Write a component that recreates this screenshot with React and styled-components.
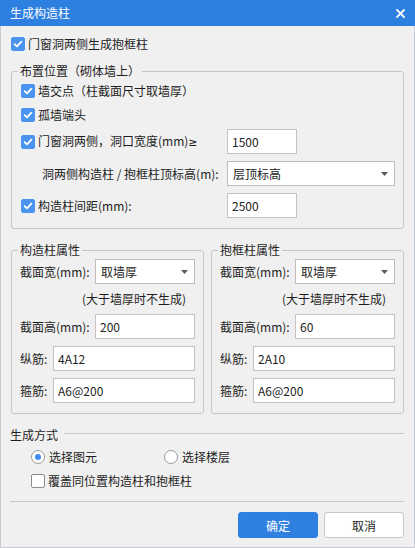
import React from "react";
import styled, { createGlobalStyle } from "styled-components";

const FONT = `"Noto Sans CJK SC", "Microsoft YaHei", "Noto Sans", sans-serif`;

const GlobalStyle = createGlobalStyle`
  html, body { margin: 0; padding: 0; background: #f0f0f0; }
  body { font-family: ${FONT}; font-size: 12px; color: #1e1e1e; }
  *, *::before, *::after { box-sizing: border-box; }
`;

const Window = styled.div`
  width: 415px;
  height: 548px;
  display: flex;
  flex-direction: column;
  background: #f0f0f0;
`;

const TitleBar = styled.div`
  height: 26px;
  flex-shrink: 0;
  background: #2d7fe0;
  color: #fff;
  display: flex;
  align-items: center;
  justify-content: space-between;
  padding: 0 10px 0 10px;
  font-size: 12px;
  line-height: 16px;
`;

const CloseButton = styled.div`
  width: 10px;
  height: 10px;
  display: flex;
  align-items: center;
  justify-content: center;
`;

const Body = styled.div`
  flex: 1;
  display: flex;
  flex-direction: column;
  padding: 0 10px;
  border: 1px solid #c5ccd6;
  border-top: none;
`;

const CheckRow = styled.label`
  display: flex;
  align-items: center;
  height: ${(p) => p.$h || 24}px;
  margin-top: ${(p) => p.$top || 0}px;
  padding-left: ${(p) => p.$indent || 0}px;
  gap: ${(p) => p.$gap ?? 3}px;
  line-height: 16px;
  white-space: nowrap;
`;

const Box = styled.span`
  width: 14px;
  height: 14px;
  flex-shrink: 0;
  border-radius: 2px;
  display: flex;
  align-items: center;
  justify-content: center;
  background: ${(p) => (p.$checked ? "#4a94ef" : "#fff")};
  border: 1px solid ${(p) => (p.$checked ? "#4a94ef" : "#8c8c8c")};
`;

const Group = styled.fieldset`
  margin: ${(p) => p.$top || 0}px 0 0 0;
  padding: 0;
  min-width: 0;
  border: 1px solid #c6c6c6;
  border-radius: 3px;
  width: ${(p) => (p.$w ? `${p.$w}px` : "auto")};
  flex: ${(p) => (p.$grow ? "1" : "none")};
`;

const Legend = styled.legend`
  margin-left: 6px;
  padding: 0 2px;
  font-size: 12px;
  line-height: 16px;
  color: #1e1e1e;
`;

const GroupInner = styled.div`
  display: flex;
  flex-direction: column;
  padding: ${(p) => p.$pad || "0 9px 10px 9px"};
`;

const Stack = styled.div`
  display: flex;
  flex-direction: column;
  gap: 7px;
  margin-top: ${(p) => p.$top || 0}px;
`;

const FieldRow = styled.div`
  display: flex;
  align-items: center;
  height: 25px;
  margin-top: ${(p) => p.$top || 0}px;
`;

const LabelCell = styled.div`
  width: ${(p) => p.$w}px;
  flex-shrink: 0;
  padding-left: ${(p) => p.$indent || 0}px;
  display: flex;
  align-items: center;
  gap: 3px;
  white-space: nowrap;
  line-height: 16px;
`;

const Symbol = styled.span`
  font-family: "DejaVu Sans", "Liberation Sans", sans-serif;
  font-size: 11px;
`;

const TextInput = styled.input`
  height: 25px;
  width: ${(p) => (p.$w ? `${p.$w}px` : "auto")};
  flex: ${(p) => (p.$w ? "none" : "1")};
  min-width: 0;
  border: 1px solid #c3c3c3;
  background: #fff;
  padding: 0 4px;
  font-family: ${FONT};
  font-size: 12px;
  color: #222;
  outline: none;
  margin: 0;
`;

const Select = styled.div`
  height: 25px;
  width: ${(p) => (p.$w ? `${p.$w}px` : "auto")};
  flex: ${(p) => (p.$w ? "none" : "1")};
  border: 1px solid #bdbdbd;
  background: #fff;
  display: flex;
  align-items: center;
  justify-content: space-between;
  padding: 0 6px 0 5px;
  color: #222;
  line-height: 16px;
`;

const Note = styled.div`
  height: 30px;
  display: flex;
  align-items: center;
  padding-left: ${(p) => p.$indent}px;
  white-space: nowrap;
  line-height: 16px;
`;

const PropsRow = styled.div`
  display: flex;
  gap: 7px;
  margin-top: 13px;
`;

const SectionHeader = styled.div`
  display: flex;
  align-items: center;
  height: 16px;
  margin: 13px 0 0 -1px;
  line-height: 16px;
`;

const HeaderLine = styled.div`
  flex: 1;
  height: 1px;
  margin: -3px 0 0 6px;
  background: #c8c8c8;
`;

const RadioRow = styled.div`
  display: flex;
  align-items: center;
  height: 20px;
  margin-top: 4px;
  padding-left: 20px;
`;

const RadioItem = styled.label`
  display: flex;
  align-items: center;
  gap: 4px;
  width: ${(p) => (p.$w ? `${p.$w}px` : "auto")};
  line-height: 16px;
`;

const RadioCircle = styled.span`
  width: 14px;
  height: 14px;
  border-radius: 50%;
  border: 1px solid #9a9a9a;
  background: #fff;
  display: flex;
  align-items: center;
  justify-content: center;
  &::after {
    content: "";
    width: 6px;
    height: 6px;
    border-radius: 50%;
    background: ${(p) => (p.$on ? "#3d8ef0" : "transparent")};
  }
`;

const Separator = styled.div`
  height: 1px;
  background: #c8c8c8;
  margin: 10px 0 0 -1px;
`;

const ButtonBar = styled.div`
  display: flex;
  justify-content: flex-end;
  gap: 6px;
  margin-top: 10px;
`;

const Button = styled.button`
  width: 80px;
  height: 26px;
  border-radius: 3px;
  font-family: ${FONT};
  font-size: 12px;
  margin: 0;
  padding: 0;
  cursor: pointer;
  background: ${(p) => (p.$primary ? "#2f80e0" : "#fff")};
  color: ${(p) => (p.$primary ? "#fff" : "#1e1e1e")};
  border: 1px solid ${(p) => (p.$primary ? "#2f80e0" : "#c8c8c8")};
`;

const Check = ({ checked }) => (
  <Box $checked={checked}>
    {checked && (
      <svg width="10" height="10" viewBox="0 0 10 10">
        <path d="M1.6 5.2 L4 7.4 L8.4 2.6" fill="none" stroke="#fff" strokeWidth="1.8" strokeLinecap="round" strokeLinejoin="round" />
      </svg>
    )}
  </Box>
);

const Arrow = () => (
  <svg width="7" height="4" viewBox="0 0 7 4">
    <polygon points="0,0 7,0 3.5,4" fill="#5a5a5a" />
  </svg>
);

const PropGroup = ({ title, w, grow, height, long, stir }) => (
  <Group $w={w} $grow={grow}>
    <Legend>{title}</Legend>
    <GroupInner $pad="0 8px 10px 8px">
      <FieldRow $top={1}>
        <LabelCell $w={75}>截面宽(mm):</LabelCell>
        <Select>
          <span>取墙厚</span>
          <Arrow />
        </Select>
      </FieldRow>
      <Note $indent={62}>(大于墙厚时不生成)</Note>
      <Stack>
        <FieldRow>
          <LabelCell $w={75}>截面高(mm):</LabelCell>
          <TextInput readOnly defaultValue={height} />
        </FieldRow>
        <FieldRow>
          <LabelCell $w={33}>纵筋:</LabelCell>
          <TextInput readOnly defaultValue={long} />
        </FieldRow>
        <FieldRow>
          <LabelCell $w={33}>箍筋:</LabelCell>
          <TextInput readOnly defaultValue={stir} />
        </FieldRow>
      </Stack>
    </GroupInner>
  </Group>
);

export default function App() {
  return (
    <>
      <GlobalStyle />
      <Window>
        <TitleBar>
          <span>生成构造柱</span>
          <CloseButton>
            <svg width="9" height="9" viewBox="0 0 9 9">
              <path d="M1 1 L8 8 M8 1 L1 8" stroke="#fff" strokeWidth="1.8" strokeLinecap="square" />
            </svg>
          </CloseButton>
        </TitleBar>
        <Body>
          <CheckRow $h={20} $top={8}>
            <Check checked />
            <span>门窗洞两侧生成抱框柱</span>
          </CheckRow>

          <Group $top={9}>
            <Legend>布置位置（砌体墙上）</Legend>
            <GroupInner>
              <CheckRow>
                <Check checked />
                <span>墙交点（柱截面尺寸取墙厚）</span>
              </CheckRow>
              <CheckRow>
                <Check checked />
                <span>孤墙端头</span>
              </CheckRow>
              <Stack $top={2}>
                <FieldRow>
                  <LabelCell $w={206}>
                    <Check checked />
                    <span>
                      门窗洞两侧，洞口宽度(mm)<Symbol>≥</Symbol>
                    </span>
                  </LabelCell>
                  <TextInput $w={70} readOnly defaultValue="1500" />
                </FieldRow>
                <FieldRow>
                  <LabelCell $w={206} $indent={21}>
                    洞两侧构造柱 / 抱框柱顶标高(m):
                  </LabelCell>
                  <Select $w={168}>
                    <span>层顶标高</span>
                    <Arrow />
                  </Select>
                </FieldRow>
                <FieldRow>
                  <LabelCell $w={206}>
                    <Check checked />
                    <span>构造柱间距(mm):</span>
                  </LabelCell>
                  <TextInput $w={70} readOnly defaultValue="2500" />
                </FieldRow>
              </Stack>
            </GroupInner>
          </Group>

          <PropsRow>
            <PropGroup title="构造柱属性" w={193} height="200" long="4A12" stir="A6@200" />
            <PropGroup title="抱框柱属性" grow height="60" long="2A10" stir="A6@200" />
          </PropsRow>

          <SectionHeader>
            <span>生成方式</span>
            <HeaderLine />
          </SectionHeader>
          <RadioRow>
            <RadioItem $w={133}>
              <RadioCircle $on />
              <span>选择图元</span>
            </RadioItem>
            <RadioItem>
              <RadioCircle />
              <span>选择楼层</span>
            </RadioItem>
          </RadioRow>
          <CheckRow $h={20} $top={4} $indent={20}>
            <Check />
            <span>覆盖同位置构造柱和抱框柱</span>
          </CheckRow>
          <Separator />
          <ButtonBar>
            <Button $primary>确定</Button>
            <Button>取消</Button>
          </ButtonBar>
        </Body>
      </Window>
    </>
  );
}
